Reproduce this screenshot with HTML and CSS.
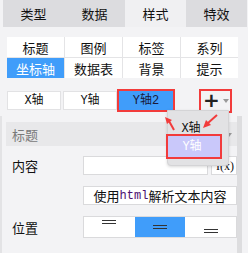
FILE: index.html
```html
<!DOCTYPE html>
<html>
<head>
<meta charset="utf-8">
<link rel="stylesheet" href="styles.css">
</head>
<body>
<div class="page">
  <div class="tabs">
    <div class="tab">类型</div>
    <div class="tab">数据</div>
    <div class="tab active">样式</div>
    <div class="tab">特效</div>
  </div>
  <div class="subtabs">
    <div class="sub">标题</div>
    <div class="sub">图例</div>
    <div class="sub">标签</div>
    <div class="sub">系列</div>
    <div class="sub selected">坐标轴</div>
    <div class="sub">数据表</div>
    <div class="sub">背景</div>
    <div class="sub">提示</div>
  </div>
  <div class="axes">
    <div class="axis">X轴</div>
    <div class="axis">Y轴</div>
    <div class="axis current">Y轴2</div>
    <div class="add"><span class="plus">+</span><span class="caret"></span></div>
  </div>
  <div class="pane">
    <div class="section">标题<span class="tri"></span></div>
    <div class="row first">
      <div class="label">内容</div>
      <div class="input"></div>
      <div class="fx">I(x)</div>
    </div>
    <div class="row">
      <div class="label"></div>
      <div class="btn">使用<span class="mono">html</span>解析文本内容</div>
    </div>
    <div class="row">
      <div class="label">位置</div>
      <div class="seg">
        <div class="opt top"><i class="l1"></i><i class="l2"></i></div>
        <div class="opt mid on"><i class="l1"></i><i class="l2"></i></div>
        <div class="opt bot"><i class="l1"></i><i class="l2"></i></div>
      </div>
    </div>
    <div class="scroll"></div>
  </div>
  <div class="popup">
    <div class="item">X轴</div>
    <div class="item picked">Y轴</div>
  </div>
  <svg class="arrows" width="248" height="253" viewBox="0 0 248 253">
    <g stroke="#f23b3b" stroke-width="2" fill="#f23b3b">
      <line x1="174" y1="130" x2="169" y2="121"/>
      <polygon points="165,117 172,120 167,124" stroke="none"/>
      <line x1="217" y1="115" x2="208" y2="123"/>
      <polygon points="203,128 206,120 211,125" stroke="none"/>
    </g>
  </svg>
</div>
</body>
</html>
```
FILE: styles.css
```css
* { box-sizing: border-box; }
html, body { margin: 0; padding: 0; }
body {
  width: 248px;
  height: 253px;
  overflow: hidden;
  background: #f3f3f5;
  font-family: "Noto Sans CJK SC", "Liberation Sans", sans-serif;
  font-size: 13px;
  color: #111;
}
.page { position: relative; width: 248px; height: 253px; }
.tabs {
  display: grid;
  grid-template-columns: repeat(4, 61px);
  margin-left: 3px;
  height: 27px;
}
.tab {
  background: #dcdcdf;
  display: flex;
  align-items: center;
  justify-content: center;
  line-height: 1;
}
.tab.active { background: #f0f0f2; }
.subtabs {
  display: grid;
  grid-template-columns: repeat(4, 57px);
  grid-auto-rows: 20px;
  gap: 1px;
  margin: 10px 0 0 7px;
  width: 231px;
  background: #e4e4e6;
}
.sub {
  background: #fff;
  display: flex;
  align-items: center;
  justify-content: center;
  line-height: 1;
}
.sub.selected { background: #409dfa; color: #fff; }
.axes {
  display: flex;
  align-items: center;
  margin: 12px 0 0 7px;
  height: 21px;
}
.axis {
  width: 54px;
  height: 19px;
  margin-right: 2px;
  background: #fff;
  border: 1px solid #e2e2e4;
  display: flex;
  align-items: center;
  justify-content: center;
  font-family: "Liberation Mono", "Noto Sans CJK SC", monospace;
  font-size: 12px;
  line-height: 1;
  color: #111;
}
.axis.current {
  background: #409dfa;
  border-color: #409dfa;
  outline: 2px solid #f23b3b;
  color: #1a1a3a;
}
.add {
  margin-left: 24px;
  width: 33px;
  height: 24px;
  border: 2px solid #f23b3b;
  display: flex;
  align-items: center;
  padding-left: 2px;
}
.plus {
  font-family: "DejaVu Sans", sans-serif;
  font-size: 20px;
  font-weight: bold;
  line-height: 1;
  color: #222;
  margin-top: -2px;
}
.caret {
  width: 0; height: 0;
  border-left: 3px solid transparent;
  border-right: 3px solid transparent;
  border-top: 4px solid #999;
  margin-left: 3px;
}
.pane {
  position: relative;
  margin-top: 5px;
  height: 138px;
  border-left: 2px solid #e3e3e5;
  padding: 6px 11px 0 4px;
}
.section {
  position: relative;
  height: 24px;
  background: #e8e8ea;
  color: #7a7a7a;
  display: flex;
  align-items: center;
  padding-left: 6px;
  line-height: 1;
}
.tri {
  position: absolute;
  right: 5px;
  top: 11px;
  border-left: 3px solid transparent;
  border-right: 3px solid transparent;
  border-top: 4px solid #999;
}
.row {
  display: flex;
  align-items: center;
  margin-top: 11px;
}
.row.first { margin-top: 10px; }
.label {
  width: 77px;
  padding-left: 6px;
  line-height: 1;
}
.input {
  width: 125px;
  height: 19px;
  background: #fff;
  border: 1px solid #dadadc;
}
.fx {
  margin-left: 3px;
  width: 26px;
  height: 19px;
  background: #fff;
  border: 1px solid #dadadc;
  font-family: "Liberation Serif", serif;
  font-size: 12px;
  display: flex;
  align-items: center;
  justify-content: flex-end;
  padding-right: 2px;
  line-height: 1;
}
.btn {
  width: 154px;
  height: 19px;
  background: #fff;
  border: 1px solid #dadadc;
  display: flex;
  align-items: center;
  justify-content: center;
  line-height: 1;
}
.mono {
  font-family: "Liberation Mono", monospace;
  font-size: 12px;
  color: #4b1070;
}
.seg {
  width: 154px;
  height: 22px;
  display: flex;
  background: #fff;
  border: 1px solid #dadadc;
}
.opt {
  flex: 1;
  display: flex;
  flex-direction: column;
  align-items: center;
  gap: 2px;
}
.opt i { display: block; height: 1px; background: #333; }
.opt .l1 { width: 14px; }
.opt .l2 { width: 14px; }
.opt.top { justify-content: flex-start; padding-top: 3px; }
.opt.mid { justify-content: center; }
.opt.bot { justify-content: flex-end; padding-bottom: 4px; }
.opt.on { background: #409dfa; }
.scroll {
  position: absolute;
  right: 6px;
  top: 0;
  width: 5px;
  height: 138px;
  background: #dddddf;
}
.popup {
  position: absolute;
  left: 167px;
  top: 110px;
  width: 62px;
  height: 56px;
  background: #e2e2e4;
  border: 1px solid #d4d4d6;
  border-radius: 0 0 4px 4px;
  box-shadow: 0 1px 3px rgba(0,0,0,0.15);
  padding-top: 10px;
}
.item {
  height: 15px;
  display: flex;
  align-items: center;
  justify-content: center;
  padding-right: 14px;
  font-family: "Liberation Mono", "Noto Sans CJK SC", monospace;
  font-size: 12px;
  line-height: 1;
  color: #111;
}
.item.picked {
  margin: 0 8px 0 0;
  padding-right: 4px;
  height: 21px;
  background: #c9c8fa;
  outline: 2px solid #f23b3b;
  color: #fff;
}
.arrows { position: absolute; left: 0; top: 0; pointer-events: none; }
```
